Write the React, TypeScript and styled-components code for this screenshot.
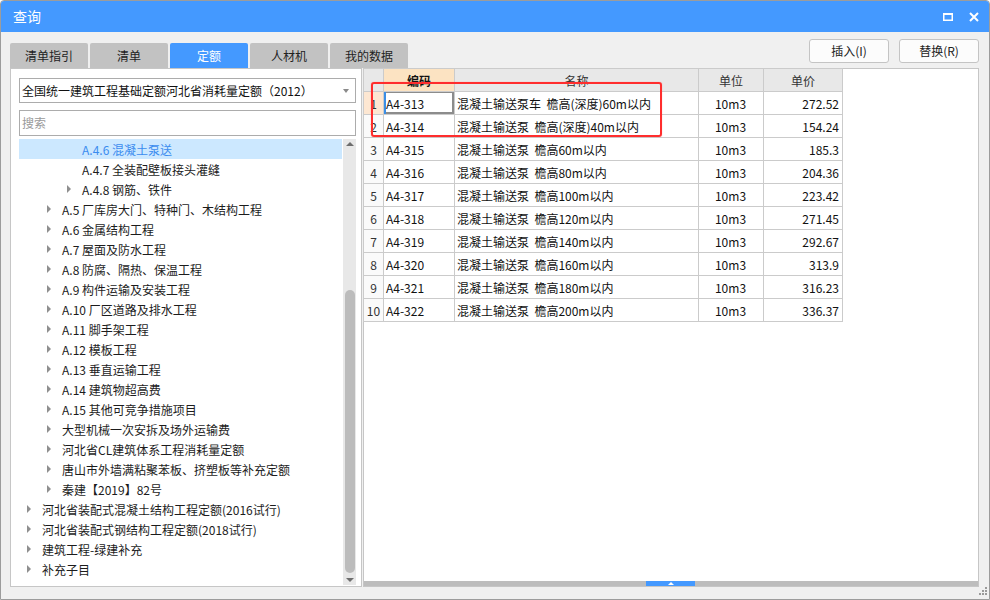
import React from "react";
import styled, { createGlobalStyle } from "styled-components";

const GlobalStyle = createGlobalStyle`
  html, body { margin: 0; padding: 0; background: #ffffff; }
  body { font-family: "Noto Sans CJK SC", "Liberation Sans", sans-serif; }
  * { box-sizing: border-box; }
`;

const BLUE = "#4499ff";

const Window = styled.div`
  position: relative;
  width: 990px;
  height: 600px;
  border: 1px solid #9c9c9c;
  border-radius: 4px 4px 0 0;
  background: #f0f0f0;
  display: flex;
  flex-direction: column;
  overflow: hidden;
`;

const TitleBar = styled.div`
  height: 31px;
  flex: none;
  background: ${BLUE};
  display: flex;
  align-items: center;
  padding: 0 2px 0 12px;
  color: #fff;
`;

const Title = styled.div`
  flex: 1;
  font-size: 14px;
  line-height: 31px;
`;

const TitleIcon = styled.div`
  width: 26px;
  height: 20px;
  display: flex;
  align-items: center;
  justify-content: center;
`;

const Body = styled.div`
  flex: 1;
  display: flex;
  flex-direction: column;
  padding: 0 10px 12px 9px;
  min-height: 0;
`;

const Toolbar = styled.div`
  height: 36px;
  flex: none;
  display: flex;
  align-items: flex-end;
`;

const Tabs = styled.div`
  flex: 1;
  display: flex;
  gap: 2px;
`;

const Tab = styled.div<{ $active?: boolean }>`
  width: 78px;
  height: 25px;
  border-radius: 2px 2px 0 0;
  background: ${(p) => (p.$active ? BLUE : "#c2c2c2")};
  color: ${(p) => (p.$active ? "#fff" : "#222")};
  font-size: 12px;
  line-height: 25px;
  text-align: center;
`;

const Buttons = styled.div`
  align-self: flex-start;
  margin-top: 7px;
  display: flex;
  gap: 10px;
`;

const Button = styled.div`
  width: 80px;
  height: 24px;
  border: 1px solid #c4c4c4;
  border-radius: 3px;
  background: #fcfcfc;
  color: #222;
  font-size: 12px;
  line-height: 22px;
  text-align: center;
`;

const Panels = styled.div`
  flex: 1;
  display: flex;
  gap: 1px;
  min-height: 0;
`;

const LeftPanel = styled.div`
  width: 352px;
  flex: none;
  border: 1px solid #c6c6c6;
  background: #fff;
  display: flex;
  flex-direction: column;
  padding: 9px 5px 0 8px;
`;

const Select = styled.div`
  height: 25px;
  border: 1px solid #acacac;
  display: flex;
  align-items: center;
  padding: 0 6px 0 2px;
  font-size: 12px;
  color: #111;
`;

const SelectText = styled.div`
  flex: 1;
  white-space: nowrap;
`;

const Caret = styled.div`
  width: 0;
  height: 0;
  border-left: 3.5px solid transparent;
  border-right: 3.5px solid transparent;
  border-top: 4px solid #8a8a8a;
`;

const Search = styled.div`
  height: 26px;
  margin-top: 7px;
  border: 1px solid #acacac;
  padding-left: 2px;
  font-size: 12px;
  line-height: 24px;
  color: #9a9a9a;
`;

const TreeArea = styled.div`
  flex: 1;
  margin-top: 3px;
  display: flex;
  gap: 1px;
  min-height: 0;
  padding-bottom: 1px;
`;

const TreeList = styled.div`
  flex: 1;
  overflow: hidden;
`;

const TreeRow = styled.div<{ $level: number; $selected?: boolean }>`
  height: 20px;
  display: flex;
  align-items: center;
  padding-left: ${(p) => 8 + (p.$level - 1) * 20}px;
  background: ${(p) => (p.$selected ? "#cce8ff" : "transparent")};
  color: ${(p) => (p.$selected ? "#3b8cef" : "#1c1c1c")};
  font-size: 12px;
  white-space: nowrap;
`;

const Expander = styled.div<{ $leaf?: boolean }>`
  width: 15px;
  flex: none;
  display: flex;
  align-items: center;
  &::before {
    content: "";
    display: ${(p) => (p.$leaf ? "none" : "block")};
    width: 0;
    height: 0;
    border-top: 4px solid transparent;
    border-bottom: 4px solid transparent;
    border-left: 4px solid #8f8f8f;
  }
`;

const VScroll = styled.div`
  width: 13px;
  flex: none;
  background: #e8e8e8;
  display: flex;
  flex-direction: column;
  align-items: center;
  padding: 3px 0 3px;
`;

const ScrollArrow = styled.div<{ $down?: boolean }>`
  width: 0;
  height: 0;
  border-left: 4px solid transparent;
  border-right: 4px solid transparent;
  ${(p) => (p.$down ? "border-top: 4px solid #6e6e6e;" : "border-bottom: 4px solid #6e6e6e;")}
`;

const ScrollTrack = styled.div`
  flex: 1;
  width: 100%;
  display: flex;
  flex-direction: column;
  justify-content: flex-end;
  align-items: center;
  padding: 0 0 5px;
`;

const ScrollThumb = styled.div`
  width: 10px;
  height: 283px;
  border-radius: 5px;
  background: #bcbcbc;
`;

const RightPanel = styled.div`
  position: relative;
  flex: 1;
  border: 1px solid #c6c6c6;
  background: #fff;
  display: flex;
  flex-direction: column;
`;

const TableArea = styled.div`
  flex: 1;
  min-height: 0;
`;

const Table = styled.table`
  border-collapse: collapse;
  table-layout: fixed;
  font-size: 12px;
  color: #111;
  margin-top: -1px;
  margin-left: -1px;
`;

const Col = styled.col<{ $w: number }>`
  width: ${(p) => p.$w}px;
`;

const Row = styled.tr`
  height: 23px;
`;

const HeadCell = styled.th<{ $hot?: boolean }>`
  border: 1px solid #cbcbcb;
  background: ${(p) => (p.$hot ? "#fce3c2" : "#e8e8e8")};
  font-weight: ${(p) => (p.$hot ? 700 : 400)};
  color: ${(p) => (p.$hot ? "#111" : "#333")};
  font-size: 12px;
  text-align: center;
  padding: 0;
`;

const NumCell = styled.td<{ $hot?: boolean }>`
  border: 1px solid #cbcbcb;
  background: ${(p) => (p.$hot ? "#fde7d2" : "#fafafa")};
  text-align: center;
  padding: 0;
  color: #333;
`;

const Cell = styled.td<{ $align?: string; $focus?: boolean }>`
  border: 1px solid #cbcbcb;
  padding: 0 3px 0 2px;
  text-align: ${(p) => p.$align || "left"};
  white-space: pre;
  overflow: hidden;
  ${(p) =>
    p.$focus
      ? "box-shadow: inset 2px 0 0 #3a8ee6, inset -2px -2px 0 #8c8c8c, inset 0 1px 0 #8c8c8c;"
      : ""}
`;

const Highlight = styled.div`
  position: absolute;
  left: 7px;
  top: 13px;
  width: 291px;
  height: 55px;
  border: 2px solid #ff2d2d;
  border-radius: 3px;
  box-shadow: 0 0 1px rgba(255, 60, 60, 0.6);
  pointer-events: none;
`;

const HBar = styled.div`
  height: 5px;
  flex: none;
  background: #bdbdbd;
  display: flex;
`;

const HThumb = styled.div`
  margin-left: 282px;
  width: 49px;
  background: ${BLUE};
  display: flex;
  justify-content: center;
  align-items: center;
  &::before {
    content: "";
    width: 0;
    height: 0;
    border-left: 3px solid transparent;
    border-right: 3px solid transparent;
    border-bottom: 3px solid #fff;
  }
`;

const Grip = styled.svg`
  position: absolute;
  right: 1px;
  bottom: 1px;
`;

type Node = { level: number; text: string; leaf?: boolean; selected?: boolean };

const tree: Node[] = [
  { level: 3, text: "A.4.6 混凝土泵送", leaf: true, selected: true },
  { level: 3, text: "A.4.7 全装配壁板接头灌缝", leaf: true },
  { level: 3, text: "A.4.8 钢筋、铁件" },
  { level: 2, text: "A.5 厂库房大门、特种门、木结构工程" },
  { level: 2, text: "A.6 金属结构工程" },
  { level: 2, text: "A.7 屋面及防水工程" },
  { level: 2, text: "A.8 防腐、隔热、保温工程" },
  { level: 2, text: "A.9 构件运输及安装工程" },
  { level: 2, text: "A.10 厂区道路及排水工程" },
  { level: 2, text: "A.11 脚手架工程" },
  { level: 2, text: "A.12 模板工程" },
  { level: 2, text: "A.13 垂直运输工程" },
  { level: 2, text: "A.14 建筑物超高费" },
  { level: 2, text: "A.15 其他可竞争措施项目" },
  { level: 2, text: "大型机械一次安拆及场外运输费" },
  { level: 2, text: "河北省CL建筑体系工程消耗量定额" },
  { level: 2, text: "唐山市外墙满粘聚苯板、挤塑板等补充定额" },
  { level: 2, text: "秦建【2019】82号" },
  { level: 1, text: "河北省装配式混凝土结构工程定额(2016试行)" },
  { level: 1, text: "河北省装配式钢结构工程定额(2018试行)" },
  { level: 1, text: "建筑工程-绿建补充" },
  { level: 1, text: "补充子目" },
];

const rows = [
  ["A4-313", "混凝土输送泵车  檐高(深度)60m以内", "272.52"],
  ["A4-314", "混凝土输送泵  檐高(深度)40m以内", "154.24"],
  ["A4-315", "混凝土输送泵  檐高60m以内", "185.3"],
  ["A4-316", "混凝土输送泵  檐高80m以内", "204.36"],
  ["A4-317", "混凝土输送泵  檐高100m以内", "223.42"],
  ["A4-318", "混凝土输送泵  檐高120m以内", "271.45"],
  ["A4-319", "混凝土输送泵  檐高140m以内", "292.67"],
  ["A4-320", "混凝土输送泵  檐高160m以内", "313.9"],
  ["A4-321", "混凝土输送泵  檐高180m以内", "316.23"],
  ["A4-322", "混凝土输送泵  檐高200m以内", "336.37"],
];

const tabs = ["清单指引", "清单", "定额", "人材机", "我的数据"];

export default function App() {
  return (
    <>
      <GlobalStyle />
      <Window>
        <TitleBar>
          <Title>查询</Title>
          <TitleIcon>
            <svg width="10" height="8" viewBox="0 0 10 8">
              <rect x="0.75" y="1" width="8.5" height="6.25" fill="none" stroke="#fff" strokeWidth="1.5" />
              <rect x="0" y="0" width="10" height="2" fill="#fff" />
            </svg>
          </TitleIcon>
          <TitleIcon>
            <svg width="10" height="10" viewBox="0 0 10 10">
              <path d="M1 1 L9 9 M9 1 L1 9" stroke="#fff" strokeWidth="2" />
            </svg>
          </TitleIcon>
        </TitleBar>
        <Body>
          <Toolbar>
            <Tabs>
              {tabs.map((t) => (
                <Tab key={t} $active={t === "定额"}>
                  {t}
                </Tab>
              ))}
            </Tabs>
            <Buttons>
              <Button>插入(I)</Button>
              <Button>替换(R)</Button>
            </Buttons>
          </Toolbar>
          <Panels>
            <LeftPanel>
              <Select>
                <SelectText>全国统一建筑工程基础定额河北省消耗量定额（2012）</SelectText>
                <Caret />
              </Select>
              <Search>搜索</Search>
              <TreeArea>
                <TreeList>
                  {tree.map((n) => (
                    <TreeRow key={n.text} $level={n.level} $selected={n.selected}>
                      <Expander $leaf={n.leaf} />
                      {n.text}
                    </TreeRow>
                  ))}
                </TreeList>
                <VScroll>
                  <ScrollArrow />
                  <ScrollTrack>
                    <ScrollThumb />
                  </ScrollTrack>
                  <ScrollArrow $down />
                </VScroll>
              </TreeArea>
            </LeftPanel>
            <RightPanel>
              <TableArea>
                <Table>
                  <colgroup>
                    <Col $w={20} />
                    <Col $w={71} />
                    <Col $w={244} />
                    <Col $w={65} />
                    <Col $w={79} />
                  </colgroup>
                  <thead>
                    <Row>
                      <HeadCell />
                      <HeadCell $hot>编码</HeadCell>
                      <HeadCell>名称</HeadCell>
                      <HeadCell>单位</HeadCell>
                      <HeadCell>单价</HeadCell>
                    </Row>
                  </thead>
                  <tbody>
                    {rows.map((r, i) => (
                      <Row key={r[0]}>
                        <NumCell $hot={i === 0}>{i + 1}</NumCell>
                        <Cell $focus={i === 0}>{r[0]}</Cell>
                        <Cell>{r[1]}</Cell>
                        <Cell $align="center">10m3</Cell>
                        <Cell $align="right">{r[2]}</Cell>
                      </Row>
                    ))}
                  </tbody>
                </Table>
              </TableArea>
              <HBar>
                <HThumb />
              </HBar>
              <Highlight />
            </RightPanel>
          </Panels>
        </Body>
        <Grip width="11" height="11" viewBox="0 0 11 11">
          <g fill="#9a9a9a">
            <rect x="8" y="0" width="2" height="2" />
            <rect x="5" y="3" width="2" height="2" />
            <rect x="8" y="3" width="2" height="2" />
            <rect x="2" y="6" width="2" height="2" />
            <rect x="5" y="6" width="2" height="2" />
            <rect x="8" y="6" width="2" height="2" />
          </g>
        </Grip>
      </Window>
    </>
  );
}
